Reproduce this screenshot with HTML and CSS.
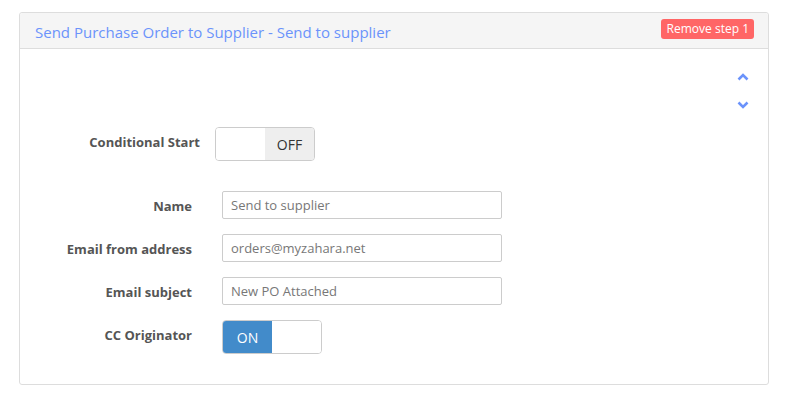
FILE: index.html
```html
<!DOCTYPE html>
<html lang="en">
<head>
  <meta charset="UTF-8" />
  <title>Workflow step</title>
  <link rel="stylesheet" href="styles.css">
</head>
<body>
  <div class="page">
    <div class="panel">
      <div class="panel-heading">
        <span class="panel-title">Send Purchase Order to Supplier - Send to supplier</span>
        <span class="badge-remove">Remove step 1</span>
      </div>
      <div class="panel-body">
        <div class="move-arrows">
          <svg class="arrow" width="12" height="8" viewBox="0 0 12 8"><polyline points="1.5,6.5 6,2 10.5,6.5" fill="none" stroke="#6b93fb" stroke-width="2.6"/></svg>
          <svg class="arrow arrow-down" width="12" height="8" viewBox="0 0 12 8"><polyline points="1.5,1.5 6,6 10.5,1.5" fill="none" stroke="#6b93fb" stroke-width="2.6"/></svg>
        </div>

        <!-- conditional start -->
        <div class="row row-cond">
          <label class="label-wide">Conditional Start</label>
          <div class="switch">
            <span class="switch-blank"></span>
            <span class="switch-off">OFF</span>
          </div>
        </div>

        <div class="row">
          <label class="label">Name</label>
          <input type="text" class="field" value="Send to supplier" />
        </div>
        <div class="row">
          <label class="label">Email from address</label>
          <input type="text" class="field" value="orders@myzahara.net" />
        </div>
        <div class="row">
          <label class="label">Email subject</label>
          <input type="text" class="field" value="New PO Attached" />
        </div>
        <div class="row row-last">
          <label class="label">CC Originator</label>
          <div class="switch">
            <span class="switch-on">ON</span>
            <span class="switch-blank"></span>
          </div>
        </div>
      </div>
    </div>
  </div>
</body>
</html>
```

FILE: styles.css
```css
body {
  margin: 0;
  font-family: "Open Sans", "Liberation Sans", sans-serif;
  background: #fff;
  color: #555;
}
.page {
  padding: 12px 23px 0 19px;
}
.panel {
  border: 1px solid #ddd;
  border-radius: 3px;
  box-sizing: border-box;
  height: 373px;
}
.panel-heading {
  display: flex;
  align-items: center;
  justify-content: space-between;
  height: 35px;
  padding: 0 14px 0 15px;
  background: #f5f5f5;
  border-bottom: 1px solid #ddd;
  border-radius: 3px 3px 0 0;
}
.panel-title {
  font-size: 15px;
  color: #6b93fb;
  margin-top: 2px;
}
.badge-remove {
  background: #ff6666;
  color: #fff;
  font-size: 12px;
  line-height: 20px;
  padding: 0 5px 0 6px;
  border-radius: 3px;
  align-self: flex-start;
  margin-top: 6px;
}
.panel-body {
  display: flex;
  flex-direction: column;
  padding-top: 24px;
}
.move-arrows {
  align-self: flex-end;
  margin-right: 19px;
  display: flex;
  flex-direction: column;
  height: 54px;
}
.arrow {
  display: block;
}
.arrow-down {
  margin-top: 20px;
}
.row {
  display: flex;
  align-items: center;
  margin-bottom: 15px;
}
.row-cond {
  margin-bottom: 30px;
}
.label-wide,
.label {
  font-size: 13px;
  font-weight: bold;
  color: #555;
  text-align: right;
}
.label-wide {
  width: 180px;
  margin-right: 15px;
  margin-top: -4px;
}
.label {
  width: 172px;
  margin-right: 30px;
  margin-top: 1px;
}
.row-last .label {
  margin-top: -4px;
}
.field {
  width: 280px;
  height: 28px;
  box-sizing: border-box;
  border: 1px solid #ccc;
  border-radius: 2px;
  padding: 0 8px;
  font-family: "Open Sans", "Liberation Sans", sans-serif;
  font-size: 13px;
  color: #777;
  margin: 0;
}
.switch {
  display: flex;
  width: 100px;
  height: 34px;
  box-sizing: border-box;
  border: 1px solid #ccc;
  border-radius: 4px;
  overflow: hidden;
}
.switch span {
  width: 50%;
  display: flex;
  align-items: center;
  justify-content: center;
  font-size: 14px;
}
.switch-blank {
  background: #fff;
}
.switch-off {
  background: #eee;
  color: #333;
}
.switch-on {
  background: #428bca;
  color: #fff;
}
```
